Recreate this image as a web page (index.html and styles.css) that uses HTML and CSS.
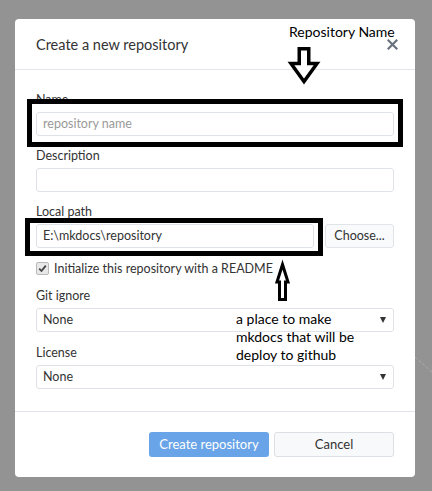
FILE: index.html
```html
<!DOCTYPE html>
<html>
<head>
<meta charset="utf-8">
<link rel="stylesheet" href="styles.css">
</head>
<body>
<svg class="bg-line" width="20" height="20" viewBox="0 0 20 20"><path d="M0 0 L18 16" stroke="#a6adb5" stroke-width="1" stroke-dasharray="3 2"/></svg>
<div class="dialog">
  <div class="dlg-header">
    <div class="dlg-title">Create a new repository</div>
    <svg class="close" width="11" height="11" viewBox="0 0 11 11"><path d="M1.5 1.5 L9.5 9.5 M9.5 1.5 L1.5 9.5" stroke="#6a737d" stroke-width="2.2" stroke-linecap="square"/></svg>
  </div>
  <div class="dlg-body">
    <div class="field">
      <label class="lbl">Name</label>
      <div class="input placeholder">repository name</div>
    </div>
    <div class="field">
      <label class="lbl">Description</label>
      <div class="input"></div>
    </div>
    <div class="field">
      <label class="lbl">Local path</label>
      <div class="path-row">
        <div class="input grow">E:\mkdocs\repository</div>
        <div class="btn choose">Choose...</div>
      </div>
    </div>
    <div class="check-row">
      <span class="checkbox"><svg width="9" height="9" viewBox="0 0 9 9"><path d="M1.2 4.6 L3.5 7 L7.8 1.6" fill="none" stroke="#444" stroke-width="1.8"/></svg></span>
      <span class="check-text">Initialize this repository with a README</span>
    </div>
    <div class="field">
      <label class="lbl">Git ignore</label>
      <div class="input select"><span>None</span><span class="caret"></span></div>
    </div>
    <div class="field license">
      <label class="lbl">License</label>
      <div class="input select"><span>None</span><span class="caret"></span></div>
    </div>
  </div>
  <div class="dlg-footer">
    <div class="btn primary">Create repository</div>
    <div class="btn cancel">Cancel</div>
  </div>
</div>

<div class="note note-top">Repository Name</div>
<svg class="arrow arrow-down" width="40" height="45" viewBox="0 0 40 45">
  <path d="M14.25 4.75 H23.75 V19.5 H32 L19 37.5 L6 19.5 H14.25 Z" fill="#fff" stroke="#000" stroke-width="3.5" stroke-linejoin="miter" stroke-miterlimit="10"/>
</svg>
<div class="hl hl-name"></div>
<div class="hl hl-path"></div>
<svg class="arrow arrow-up" width="16" height="42" viewBox="0 0 16 42">
  <path d="M7.5 1.5 L13 19 H10.5 V36.5 H4.5 V19 H2 Z" fill="#fff" stroke="#000" stroke-width="3" stroke-linejoin="miter"/>
</svg>
<div class="note note-side">a place to make<br>mkdocs that will be<br>deploy to github</div>
</body>
</html>
```
FILE: styles.css
```css
html, body {
  margin: 0;
  padding: 0;
}
body {
  background: #939393;
  width: 432px;
  height: 491px;
  padding: 19px 0 0 15px;
  box-sizing: border-box;
  position: relative;
  font-family: Lato, "Open Sans", sans-serif;
  font-size: 12.5px;
  color: #333;
}
.bg-line {
  position: absolute;
  left: 415px;
  top: 357px;
}
.dialog {
  position: relative;
  width: 400px;
  background: #fff;
  border-radius: 4px;
  box-sizing: border-box;
}
.dlg-header {
  height: 50px;
  border-bottom: 1px solid #e1e4e8;
  display: flex;
  align-items: center;
  justify-content: space-between;
  padding: 0 17px 0 21px;
}
.dlg-title {
  font-size: 14.5px;
  color: #333;
}
.close {
  display: block;
}
.dlg-body {
  padding: 22px 21px 22px 21px;
  display: flex;
  flex-direction: column;
  gap: 12px;
}
.license {
  margin-top: 1px;
}
.field {
  display: flex;
  flex-direction: column;
  gap: 4px;
}
.lbl {
  display: block;
  height: 16px;
  line-height: 16px;
}
.input {
  height: 24px;
  box-sizing: border-box;
  border: 1px solid #dfe2e6;
  border-radius: 3px;
  padding: 0 6px;
  line-height: 22px;
  color: #333;
  background: #fff;
}
.placeholder {
  color: #9a9a9a;
}
.path-row {
  display: flex;
  gap: 11px;
}
.grow {
  flex: 1;
}
.btn {
  box-sizing: border-box;
  border-radius: 3px;
  text-align: center;
}
.choose {
  width: 69px;
  height: 24px;
  line-height: 22px;
  border: 1px solid #e1e4e8;
  background: #f9fafb;
  color: #333;
}
.check-row {
  height: 16px;
  display: flex;
  align-items: center;
  gap: 5px;
}
.checkbox {
  width: 13px;
  height: 13px;
  box-sizing: border-box;
  border: 1px solid #b9b9b9;
  background: #e8e8e8;
  border-radius: 2px;
  display: flex;
  align-items: center;
  justify-content: center;
}
.checkbox svg {
  display: block;
}
.select {
  display: flex;
  align-items: center;
  justify-content: space-between;
  padding-right: 7px;
}
.caret {
  width: 0;
  height: 0;
  border-left: 3.5px solid transparent;
  border-right: 3.5px solid transparent;
  border-top: 6px solid #333;
}
.dlg-footer {
  border-top: 1px solid #e1e4e8;
  padding: 20px 21px 20px 21px;
  display: flex;
  justify-content: flex-end;
  gap: 5px;
}
.primary {
  width: 120px;
  height: 25px;
  line-height: 25px;
  background: #68a4e7;
  color: #fff;
  font-size: 13px;
}
.cancel {
  width: 120px;
  height: 25px;
  line-height: 23px;
  border: 1px solid #dcdfe3;
  background: #f8f9fa;
  color: #333;
  font-size: 13px;
}
.note {
  position: absolute;
  font-family: Lato, "Open Sans", sans-serif;
  font-size: 14px;
  color: #000;
  line-height: 18px;
}
.note-top {
  left: 289px;
  top: 23px;
}
.note-side {
  left: 236px;
  top: 310px;
}
.hl {
  position: absolute;
  border: 5px solid #000;
  box-sizing: border-box;
}
.hl-name {
  left: 27px;
  top: 99px;
  width: 376px;
  height: 48px;
}
.hl-path {
  left: 25px;
  top: 218px;
  width: 298px;
  height: 38px;
}
.arrow {
  position: absolute;
  display: block;
  overflow: visible;
}
.arrow-down {
  left: 285px;
  top: 44px;
}
.arrow-up {
  left: 275px;
  top: 263px;
}
```
